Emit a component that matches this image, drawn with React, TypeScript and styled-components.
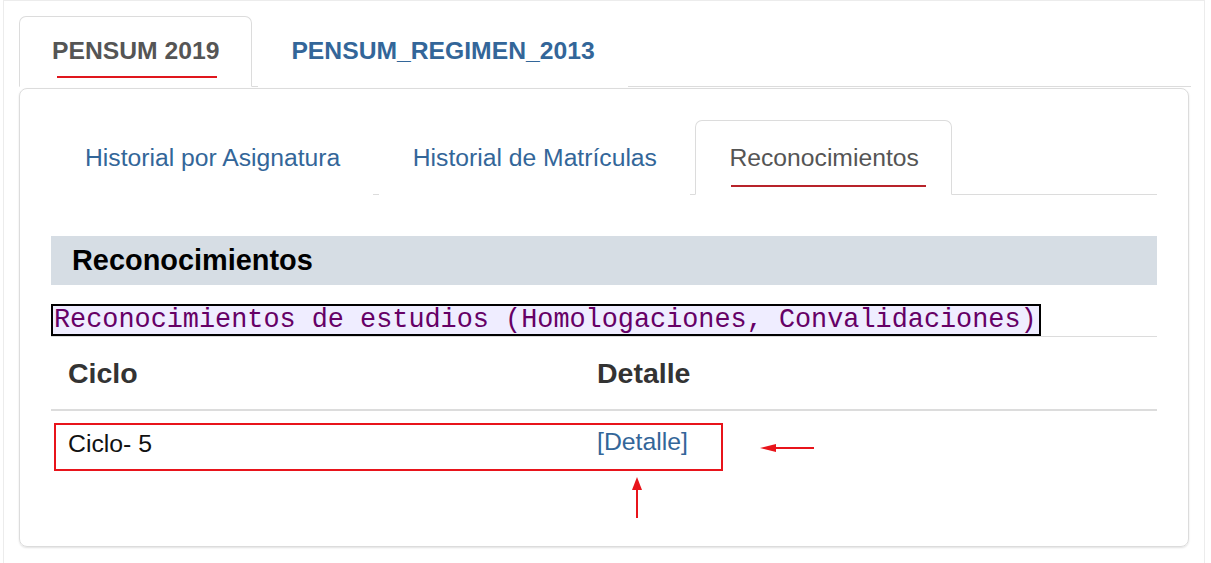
import React from "react";
import styled, { createGlobalStyle } from "styled-components";

const Global = createGlobalStyle`
  html, body { margin: 0; padding: 0; background: #ffffff; }
  body { font-family: "Liberation Sans", Arial, sans-serif; color: #111; }
  * { box-sizing: border-box; }
`;

const Frame = styled.div`
  margin-left: 3px;
  width: 1202px;
  min-height: 563px;
  border: 1px solid #ececec;
  border-bottom: none;
  padding: 15px 13px 0 15px;
`;

const TabNav = styled.div<{ $gap: number }>`
  display: flex;
  gap: ${(p) => p.$gap}px;
  border-bottom: 1px solid #dcdcdc;
`;

const Tab = styled.div<{ $active?: boolean; $bold?: boolean; $h: number; $pt: number; $pl: number }>`
  height: ${(p) => p.$h}px;
  margin-bottom: -1px;
  padding: ${(p) => p.$pt}px 32px 0 ${(p) => p.$pl}px;
  display: flex;
  flex-direction: column;
  font-size: 24.7px;
  line-height: 28px;
  font-weight: ${(p) => (p.$bold ? 700 : 400)};
  color: ${(p) => (p.$active ? "#555555" : "#336699")};
  background: #fff;
  border: 1px solid ${(p) => (p.$active ? "#dcdcdc" : "transparent")};
  border-bottom-color: ${(p) => (p.$active ? "#ffffff" : "transparent")};
  border-radius: 7px 7px 0 0;
  white-space: nowrap;
`;

const Underline = styled.span<{ $gap: number; $ml: number; $mr: number; $c: string }>`
  display: block;
  height: 2px;
  margin: ${(p) => p.$gap}px ${(p) => p.$mr}px 0 ${(p) => p.$ml}px;
  background: ${(p) => p.$c};
`;

const Card = styled.div`
  position: relative;
  margin-top: 1px;
  width: 1170px;
  height: 459px;
  border: 1px solid #dcdcdc;
  border-radius: 8px;
  box-shadow: 0 1px 2px rgba(0, 0, 0, 0.12);
  padding: 31px;
`;

const SectionHeader = styled.div`
  margin-top: 41px;
  height: 49px;
  background: #d6dde4;
  display: flex;
  align-items: center;
  padding-left: 21px;
  font-size: 28.9px;
  font-weight: 700;
  color: #000;
`;

const Caption = styled.div`
  margin-top: 19px;
  display: inline-block;
  border: 2px solid #000;
  background: #efedff;
  color: #660066;
  font-family: "Liberation Mono", "Courier New", monospace;
  font-size: 26.85px;
  line-height: 28px;
  padding: 0 2px 0 1px;
  white-space: nowrap;
`;

const Table = styled.div`
  border-top: 1px solid #dcdcdc;
`;

const Row = styled.div<{ $head?: boolean }>`
  display: grid;
  grid-template-columns: 529px 1fr;
  height: ${(p) => (p.$head ? 74 : 66)}px;
  align-items: center;
  border-bottom: ${(p) => (p.$head ? "2px solid #dcdcdc" : "none")};
  font-size: ${(p) => (p.$head ? "28.5px" : "24.8px")};
  font-weight: ${(p) => (p.$head ? 700 : 400)};
  color: ${(p) => (p.$head ? "#333333" : "#111111")};
`;

const Cell = styled.div<{ $raise?: boolean }>`
  padding-left: 17px;
  padding-bottom: ${(p) => (p.$raise ? 4 : 0)}px;
`;

const Link = styled.a`
  color: #336699;
  text-decoration: none;
`;

const Annotations = styled.svg`
  position: absolute;
  left: 0;
  top: 0;
  width: 1168px;
  height: 457px;
  pointer-events: none;
`;

export default function App() {
  return (
    <>
      <Global />
      <Frame>
        <TabNav $gap={6}>
          <Tab $active $bold $h={71} $pt={20} $pl={32}>
            PENSUM 2019
            <Underline $gap={11} $ml={5} $mr={2} $c="#e0161d" />
          </Tab>
          <Tab $bold $h={71} $pt={20} $pl={32}>PENSUM_REGIMEN_2013</Tab>
        </TabNav>
        <Card>
          <TabNav $gap={5.5}>
            <Tab $h={75} $pt={23} $pl={33}>Historial por Asignatura</Tab>
            <Tab $h={75} $pt={23} $pl={33}>Historial de Matrículas</Tab>
            <Tab $active $h={75} $pt={23} $pl={33}>
              Reconocimientos
              <Underline $gap={13} $ml={2} $mr={-7} $c="#b8232a" />
            </Tab>
          </TabNav>
          <SectionHeader>Reconocimientos</SectionHeader>
          <Caption>Reconocimientos de estudios (Homologaciones, Convalidaciones)</Caption>
          <Table>
            <Row $head>
              <Cell>Ciclo</Cell>
              <Cell>Detalle</Cell>
            </Row>
            <Row>
              <Cell>Ciclo- 5</Cell>
              <Cell $raise>
                <Link href="#">[Detalle]</Link>
              </Cell>
            </Row>
          </Table>
          <Annotations viewBox="0 0 1168 457">
            <rect x="35" y="335" width="667" height="46" fill="none" stroke="#e8141b" strokeWidth="2" />
            <line x1="755" y1="359" x2="794" y2="359" stroke="#e8141b" strokeWidth="2" />
            <polygon points="740,359 756,355 756,363" fill="#e8141b" />
            <line x1="617" y1="400" x2="617" y2="429" stroke="#e8141b" strokeWidth="2" />
            <polygon points="617,388 612,401 622,401" fill="#e8141b" />
          </Annotations>
        </Card>
      </Frame>
    </>
  );
}
